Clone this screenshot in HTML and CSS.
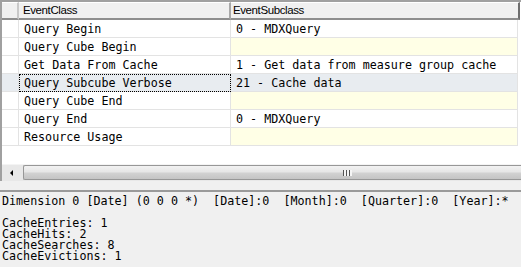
FILE: index.html
```html
<!DOCTYPE html>
<html lang="en">

<head>
    <meta charset="UTF-8">
    <title>Profiler trace</title>
    <link rel="stylesheet" href="styles.css">
</head>

<body>
    <div class="grid-pane">
        <div class="row head">
            <div class="cell ind"></div>
            <div class="cell c1">EventClass</div>
            <div class="cell c2">EventSubclass</div>
        </div>
        <div class="row">
            <div class="cell ind"></div>
            <div class="cell c1">Query Begin</div>
            <div class="cell c2">0 - MDXQuery</div>
        </div>
        <div class="row">
            <div class="cell ind"></div>
            <div class="cell c1">Query Cube Begin</div>
            <div class="cell c2 empty"></div>
        </div>
        <div class="row">
            <div class="cell ind"></div>
            <div class="cell c1">Get Data From Cache</div>
            <div class="cell c2">1 - Get data from measure group cache</div>
        </div>
        <div class="row select">
            <div class="cell ind"></div>
            <div class="cell c1 focus">Query Subcube Verbose</div>
            <div class="cell c2">21 - Cache data</div>
        </div>
        <div class="row">
            <div class="cell ind"></div>
            <div class="cell c1">Query Cube End</div>
            <div class="cell c2 empty"></div>
        </div>
        <div class="row">
            <div class="cell ind"></div>
            <div class="cell c1">Query End</div>
            <div class="cell c2">0 - MDXQuery</div>
        </div>
        <div class="row">
            <div class="cell ind"></div>
            <div class="cell c1">Resource Usage</div>
            <div class="cell c2 empty"></div>
        </div>
        <div class="filler"></div>
        <div class="hscroll">
            <div class="arrow"></div>
            <div class="thumb"><span class="grip"></span></div>
        </div>
    </div>

    <div class="splitter"></div>

    <pre class="output">Dimension 0 [Date] (0 0 0 *)  [Date]:0  [Month]:0  [Quarter]:0  [Year]:*

CacheEntries: 1
CacheHits: 2
CacheSearches: 8
CacheEvictions: 1</pre>
</body>

</html>
```

FILE: styles.css
```css
html,
body {
    margin: 0;
    height: 100%;
    background: #f0f0f0;
    overflow: hidden;
}

.grid-pane {
    height: 179px;
    border-top: 2px solid #a0a0a0;
    border-left: 2px solid #a0a0a0;
    background: #fff;
    display: flex;
    flex-direction: column;
}

.row {
    display: flex;
    height: 18px;
    font-family: "DejaVu Sans Mono", monospace;
    font-size: 11.7px;
    color: #000;
}

.cell {
    box-sizing: border-box;
    height: 18px;
    line-height: 17px;
    padding-top: 1px;
    border-bottom: 1px solid #e3e3e3;
    border-right: 1px solid #e3e3e3;
    white-space: nowrap;
    overflow: hidden;
}

.ind {
    width: 17px;
}

.c1 {
    width: 212px;
    padding-left: 5px;
}

.c2 {
    width: 287px;
    padding-left: 5px;
}

.c2.empty {
    background: #ffffe6;
}

.head .cell {
    font-family: "Liberation Sans", Arial, sans-serif;
    font-size: 11.5px;
    letter-spacing: -0.4px;
    background: #f0f0f0;
    border-top: 1px solid #fff;
    border-bottom: 2px solid #8e8e8e;
    border-right: 2px solid #a8a8a8;
    line-height: 15px;
    padding-top: 0;
}

.head .c1 {
    padding-left: 4px;
    width: 212px;
}

.head .c2 {
    padding-left: 2px;
    width: 289px;
    border-right-color: #6e6e6e;
}

.head .ind {
    border-right-color: #c8c8c8;
}

.row.select .cell {
    background: #e8ecf0;
}

.row.select .focus {
    outline: 1px dotted #000;
    outline-offset: -1px;
    padding-left: 5px;
}

.filler {
    flex: 1;
}

.hscroll {
    height: 16px;
    display: flex;
    background: #e8e8e8;
    border-top: 1px solid #f4f4f4;
}

.arrow {
    width: 19px;
    position: relative;
}

.arrow::after {
    content: "";
    position: absolute;
    left: 8px;
    top: 5px;
    border-style: solid;
    border-width: 3px 3px 3px 0;
    border-color: transparent #000 transparent transparent;
}

.thumb {
    flex: 1;
    margin: 0 0 1px 2px;
    border: 1px solid #979797;
    border-right: none;
    border-radius: 2px 0 0 2px;
    background: linear-gradient(#f2f2f2, #e6e6e6 45%, #d2d2d2 55%, #c4c4c4);
    position: relative;
}

.grip {
    position: absolute;
    left: 319px;
    top: 4px;
    width: 9px;
    height: 6px;
    background: repeating-linear-gradient(90deg, #555 0 1px, #f5f5f5 1px 3px);
}

.splitter {
    height: 9px;
    background: #f0f0f0;
    border-bottom: 2px solid #9a9a9a;
}

.output {
    margin: 0;
    padding: 4px 0 0 2px;
    font-family: "DejaVu Sans Mono", monospace;
    font-size: 11.7px;
    line-height: 11px;
    color: #000;
}
```
